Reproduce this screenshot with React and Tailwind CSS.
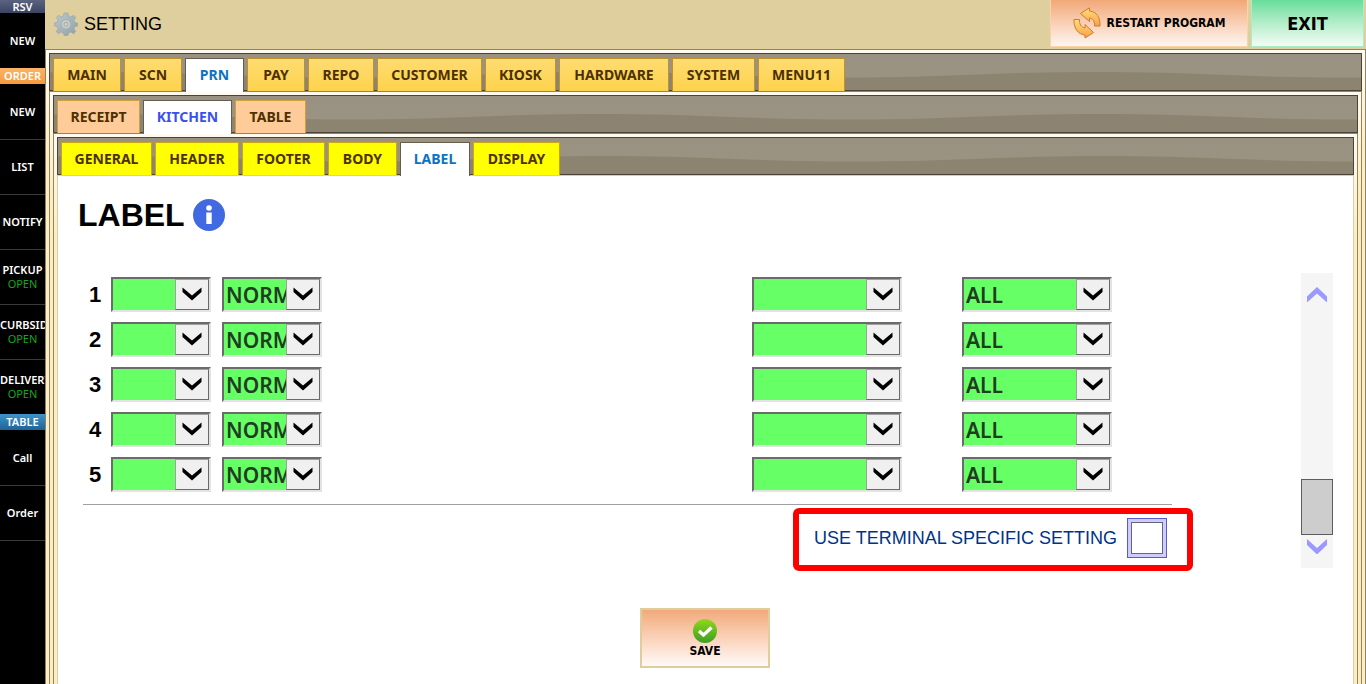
import React from 'react';

const sideGroups = [
  { title: 'RSV', tone: 'h-[13px] bg-linear-to-b from-[#5a6480] to-[#3b4563]', items: [{ name: 'NEW' }] },
  {
    title: 'ORDER',
    tone: 'h-4 bg-linear-to-b from-[#fbb466] to-[#f49a3a]',
    items: [
      { name: 'NEW' },
      { name: 'LIST' },
      { name: 'NOTIFY' },
      { name: 'PICKUP', state: 'OPEN' },
      { name: 'CURBSIDE', state: 'OPEN' },
      { name: 'DELIVERY', state: 'OPEN' },
    ],
  },
  {
    title: 'TABLE',
    tone: 'h-4 bg-linear-to-b from-[#3d94cc] to-[#1f6396]',
    end: 'border-b border-[#3a3a3a]',
    items: [{ name: 'Call' }, { name: 'Order' }],
  },
];

const mainTabs = [
  { name: 'MAIN', width: 'w-[68px]' },
  { name: 'SCN', width: 'w-[58px]' },
  { name: 'PRN', width: 'w-[59px]' },
  { name: 'PAY', width: 'w-[58px]' },
  { name: 'REPO', width: 'w-[66px]' },
  { name: 'CUSTOMER', width: 'w-[105px]' },
  { name: 'KIOSK', width: 'w-[71px]' },
  { name: 'HARDWARE', width: 'w-[110px]' },
  { name: 'SYSTEM', width: 'w-[83px]' },
  { name: 'MENU11', width: 'w-[87px]' },
];
const printTabs = [
  { name: 'RECEIPT', width: 'w-[83px]' },
  { name: 'KITCHEN', width: 'w-[89px]' },
  { name: 'TABLE', width: 'w-[71px]' },
];
const kitchenTabs = [
  { name: 'GENERAL', width: 'w-[91px]' },
  { name: 'HEADER', width: 'w-[84px]' },
  { name: 'FOOTER', width: 'w-[83px]' },
  { name: 'BODY', width: 'w-[69px]' },
  { name: 'LABEL', width: 'w-[70px]' },
  { name: 'DISPLAY', width: 'w-[87px]' },
];

function Sidebar() {
  return (
    <nav className="w-[45px] shrink-0 overflow-hidden bg-black font-['Noto_Sans',sans-serif] text-[11px] leading-[14px] font-semibold text-white">
      {sideGroups.map((group) => (
        <section key={group.title} className={group.end}>
          <h2 className={`flex items-center justify-center leading-3 ${group.tone}`}>{group.title}</h2>
          {group.items.map((item, i) => (
            <button
              key={item.name}
              className={`flex h-[55px] w-full flex-col items-[safe_center] justify-center whitespace-nowrap ${
                i > 0 ? 'border-t border-[#3a3a3a]' : ''
              }`}
            >
              <span>{item.name}</span>
              {item.state && <span className="font-normal text-[#12a81f]">{item.state}</span>}
            </button>
          ))}
        </section>
      ))}
    </nav>
  );
}

function GearIcon() {
  return (
    <svg viewBox="0 0 24 24" className="size-6" aria-hidden="true">
      <defs>
        <linearGradient id="gear" x1="0" y1="0" x2="1" y2="1">
          <stop offset="0" stopColor="#bccacf" />
          <stop offset="1" stopColor="#8fa0a6" />
        </linearGradient>
      </defs>
      <path
        fill="url(#gear)"
        stroke="#93a0a3"
        strokeWidth="0.6"
        d="M10 1h4l.6 3.100 2.300 1L19.500 3.200l2.300 2.300-1.900 2.600 1 2.300L23.500 11v3l-2.600.600-1 2.300 1.900 2.600-2.300 2.300-2.600-1.900-2.300 1L14 23.500h-4l-.6-2.600-2.300-1-2.600 1.900-2.300-2.300 1.900-2.600-1-2.300L.5 14v-3l2.600-.6 1-2.300-1.900-2.600 2.300-2.300 2.600 1.900 2.300-1z"
      />
      <circle cx="12" cy="12.300" r="4.600" fill="#c3ced1" stroke="#a3b0b3" strokeWidth="0.800" />
      <circle cx="12" cy="12.300" r="2" fill="#dfcf9e" stroke="#98a5a8" strokeWidth="0.800" />
    </svg>
  );
}

function RestartIcon() {
  return (
    <svg viewBox="0 0 28 32" className="h-8 w-7" aria-hidden="true">
      <defs>
        <linearGradient id="restart" x1="0" y1="0" x2="0" y2="1">
          <stop offset="0" stopColor="#ffdf7a" />
          <stop offset="1" stopColor="#f7a04a" />
        </linearGradient>
      </defs>
      <g fill="url(#restart)" stroke="#cf7c2a" strokeWidth="1" strokeLinejoin="round">
        <path d="M7.500 6.500L16.500.800v3.200C23.500 4.500 27.500 10.500 27 19h-5.500c.3-4.500-1.500-7.500-5-8v3.500z" />
        <path d="M20.500 25.500L12 31v-3C5 27.500.5 21 1 12.500h5.500c-.3 4.500 1.500 7.500 5.500 8.500V17.500z" />
      </g>
    </svg>
  );
}

function TopBar() {
  return (
    <header className="flex h-[49px] items-start justify-between bg-[#dfcf9e] pr-[2px] pl-[9px]">
      <div className="flex h-[47px] items-center gap-[6px]">
        <GearIcon />
        <h1 className="font-['Liberation_Sans',sans-serif] text-lg text-black">SETTING</h1>
      </div>
      <div className="flex gap-[3px] font-['DejaVu_Sans_Condensed','DejaVu_Sans',sans-serif] font-bold text-black">
        <button className="flex h-[47px] w-[198px] items-center justify-center gap-[6px] border border-t-0 border-[#fbd3a4] bg-linear-to-b from-[#f1a877] to-[#fdf6f1] text-xs">
          <RestartIcon />
          RESTART PROGRAM
        </button>
        <button className="h-[47px] w-[113px] border border-t-0 border-[#a9edc6] bg-linear-to-b from-[#66dd9b] to-[#f3fcf7] pt-px text-lg">
          EXIT
        </button>
      </div>
    </header>
  );
}

function Wave() {
  return (
    <svg className="absolute inset-0 size-full" aria-hidden="true">
      <defs>
        <linearGradient id="barTop" x1="0" y1="0" x2="0" y2="1">
          <stop offset="0" stopColor="#999181" />
          <stop offset="1" stopColor="#9c9583" />
        </linearGradient>
        <pattern id="wave" x="46" width="500" height="38" patternUnits="userSpaceOnUse">
          <rect width="500" height="38" fill="url(#barTop)" />
          <path d="M0 18C100 18 150 23.500 250 23.500S400 18 500 18V38H0z" fill="#8c8471" />
        </pattern>
      </defs>
      <rect width="100%" height="100%" fill="url(#wave)" />
    </svg>
  );
}

function TabPanel({ tabs, active, tabStyle, activeStyle, label, children }) {
  return (
    <div className="flex grow flex-col border-x border-t border-[#8e846b] bg-linear-to-b from-[#fffaf0] to-[#feeebd] to-[100px] px-[3px] pt-[3px]">
      <div className="relative h-[38px] border border-[#494437]">
        <Wave />
        <div role="tablist" aria-label={label} className="relative flex gap-[3px] px-[3px] pt-1">
          {tabs.map((tab) => (
            <button
              key={tab.name}
              role="tab"
              aria-selected={tab.name === active}
              className={`border border-b-0 text-center font-['Noto_Sans',sans-serif] text-[14px] leading-8 font-bold ${tab.width} ${
                tab.name === active
                  ? `z-10 h-[34px] border-[#655e4e] bg-white pb-px ${activeStyle}`
                  : `h-[33px] text-[#4c3000] ${tabStyle}`
              }`}
            >
              {tab.name}
            </button>
          ))}
        </div>
      </div>
      {children}
    </div>
  );
}

function Dropdown({ label, value, width }) {
  return (
    <div className={`relative h-[35px] ${width}`}>
      <select
        aria-label={label}
        defaultValue={value}
        className="size-full appearance-none border-2 border-t-[#6b6b6b] border-r-[#e3e3e3] border-b-[#e3e3e3] border-l-[#6b6b6b] bg-[#66ff66] pt-[2px] pr-[34px] pl-[2px] font-['Noto_Sans',sans-serif] text-[21px] leading-[29px] font-semibold text-[#1f3d1f]"
      >
        <option>{value}</option>
      </select>
      <span className="pointer-events-none absolute top-[2px] right-[2px] flex h-[31px] w-[34px] justify-center border border-t-[#a0a0a0] border-r-[#696969] border-b-[#696969] border-l-[#a0a0a0] bg-[#f0f0f0] pt-[7px]">
        <svg viewBox="0 0 20 14" className="h-[14px] w-5" aria-hidden="true">
          <path d="M.5 .5L10 8.500L19.500 .5V5L10 13.500L.5 5z" fill="#000" />
        </svg>
      </span>
    </div>
  );
}

function ScrollRail() {
  return (
    <div className="flex h-[295px] w-8 shrink-0 flex-col bg-[#f5f5f5]">
      <button aria-label="Scroll up" className="flex h-11 justify-center pt-[14px]">
        <svg viewBox="0 0 20 15" className="h-[15px] w-5" aria-hidden="true">
          <path d="M0 9.500L10 0L20 9.500V15.500L10 6.500L0 15.500z" fill="#9999ff" />
        </svg>
      </button>
      <div className="grow" />
      <div className="h-14 border border-[#5c5c5c] bg-[#cdcdcd]" />
      <button aria-label="Scroll down" className="flex h-[33px] justify-center pt-1">
        <svg viewBox="0 0 20 15" className="h-[15px] w-5" aria-hidden="true">
          <path d="M0 0L10 9L20 0V6L10 15.500L0 6z" fill="#9999ff" />
        </svg>
      </button>
    </div>
  );
}

function LabelSettings() {
  return (
    <main className="flex grow flex-col border-x border-t border-[#d5cdb4] bg-white pr-px font-['Liberation_Sans',sans-serif]">
      <div className="flex h-[97px] items-start gap-2 pt-[23px] pl-5">
        <h2 className="text-[32px] leading-8 font-bold text-black">LABEL</h2>
        <svg viewBox="0 0 32 32" className="size-8" role="img" aria-label="Information">
          <circle cx="16" cy="16" r="16" fill="#4169e1" />
          <circle cx="16" cy="9" r="2.800" fill="#fff" />
          <path d="M13.300 13.500h5.400V25h-5.400z" fill="#fff" />
        </svg>
      </div>
      <div className="flex items-start pr-[19px] pl-[25px]">
        <div className="mr-[129px] grow pt-1">
          <div className="flex flex-col gap-[10px] border-b border-[#a0a0a0] pb-3">
            {[1, 2, 3, 4, 5].map((n) => (
              <div key={n} className="flex items-center">
                <span className="mr-1 w-6 text-center text-[22px] leading-6 font-bold text-black">{n}</span>
                <Dropdown label={`Row ${n} item`} value="" width="w-[100px]" />
                <div className="ml-[11px]">
                  <Dropdown label={`Row ${n} size`} value="NORMAL" width="w-[100px]" />
                </div>
                <div className="mr-15 ml-auto flex gap-15">
                  <Dropdown label={`Row ${n} printer`} value="" width="w-[150px]" />
                  <Dropdown label={`Row ${n} order type`} value="ALL" width="w-[150px]" />
                </div>
              </div>
            ))}
          </div>
          <div className="mt-[3px] -mr-[21px] ml-auto flex h-[63px] w-[400px] items-center justify-end gap-[10px] rounded-md border-[6px] border-[#ff0000] pr-5 pb-[3px]">
            <label htmlFor="terminal" className="text-lg whitespace-nowrap text-[#003388]">
              USE TERMINAL SPECIFIC SETTING
            </label>
            <span className="flex size-10 items-center justify-center border border-[#5a5acd] bg-[#ccccff]">
              <input id="terminal" type="checkbox" className="size-8 appearance-none border border-[#666677] bg-white checked:bg-[#5a5acd]" />
            </span>
          </div>
        </div>
        <ScrollRail />
      </div>
      <button className="mx-auto mt-[37px] flex h-15 w-[130px] flex-col items-center border-2 border-[#e0cc9c] bg-linear-to-b from-[#f1aa7a] to-[#fffaf7] pt-[9px] font-['DejaVu_Sans_Condensed','DejaVu_Sans',sans-serif] text-xs leading-4 font-bold text-black">
        <svg viewBox="0 0 24 24" className="size-6" aria-hidden="true">
          <defs>
            <linearGradient id="ok" x1="0" y1="0" x2="0" y2="1">
              <stop offset="0" stopColor="#8fd81c" />
              <stop offset="1" stopColor="#3f9e22" />
            </linearGradient>
          </defs>
          <circle cx="12" cy="12" r="12" fill="url(#ok)" />
          <path d="M6 12L10.500 16L18.500 8.500" fill="none" stroke="#fff" strokeWidth="3.400" />
        </svg>
        SAVE
      </button>
    </main>
  );
}

export default function App() {
  return (
    <div className="flex min-h-screen bg-white">
      <Sidebar />
      <div className="flex min-w-0 grow flex-col">
        <TopBar />
        <TabPanel
          label="Settings"
          tabs={mainTabs}
          active="PRN"
          tabStyle="border-[#c1912a] bg-linear-to-b from-[#ffdc70] to-[#fdd24c]"
          activeStyle="text-[#0b72c4]"
        >
          <TabPanel
            label="Printers"
            tabs={printTabs}
            active="KITCHEN"
            tabStyle="border-[#d1a03a] bg-[#ffcc99]"
            activeStyle="text-[#3a50ec]"
          >
            <TabPanel
              label="Kitchen printer"
              tabs={kitchenTabs}
              active="LABEL"
              tabStyle="border-[#c9a616] bg-[#ffff00]"
              activeStyle="text-[#0b72c4]"
            >
              <LabelSettings />
            </TabPanel>
          </TabPanel>
        </TabPanel>
      </div>
    </div>
  );
}
